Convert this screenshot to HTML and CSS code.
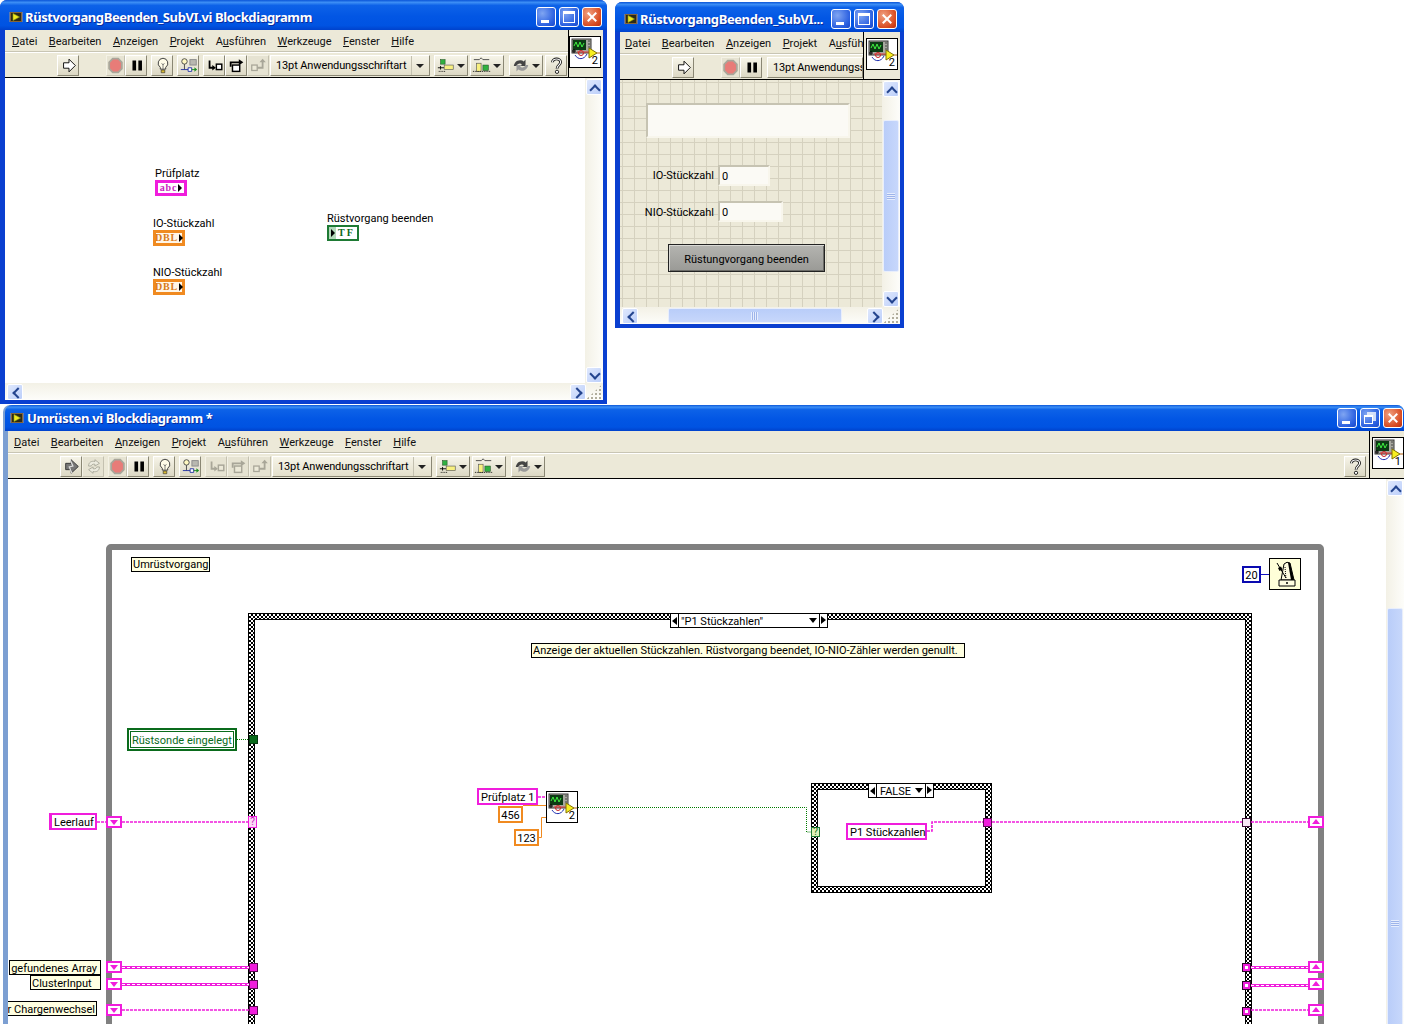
FILE: index.html
```html
<!DOCTYPE html>
<html lang="de">
<head>
<meta charset="utf-8">
<title>LabVIEW Blockdiagramme</title>
<link rel="stylesheet" href="styles.css">
</head>
<body>
<svg class="defs" width="0" height="0" aria-hidden="true">
  <defs>
    <symbol id="i-lv" viewBox="0 0 14 14"><rect x="1" y="2" width="12" height="10" fill="#4a3820"/><path d="M0 3h14M0 5h14M0 7h14M0 9h14M0 11h14" stroke="#e0a860" stroke-width=".8"/><rect x="2" y="3" width="10" height="8" fill="#2c2a18"/><path d="M4 3.500l6.500 3.500-6.500 3.500z" fill="#f0e820" stroke="#90a010" stroke-width=".6"/></symbol>
    <symbol id="i-run" viewBox="0 0 22 21"><path d="M5 7.500h6V3.500l7 7-7 7v-4H5z" fill="#fff" stroke="#000"/></symbol>
    <symbol id="i-broken" viewBox="0 0 22 21"><path d="M4 7h6V3l8 7.500-8 7.500v-4H4z" fill="#777" stroke="#333"/><path d="M9 3l3 7-4 1 3 7" fill="none" stroke="#ddd" stroke-width="1.400"/></symbol>
    <symbol id="i-rerun" viewBox="0 0 22 21"><path d="M5 10c0-4 3-6 7-5V3l5 4-5 3V8c-3-.5-4 1-4 2zM17 11c0 4-3 6-7 5v2l-5-4 5-3v2c3 .5 4-1 4-2z" fill="#ecebdf" stroke="#a8a89a"/></symbol>
    <symbol id="i-stop" viewBox="0 0 18 21"><path d="M6 3h6l4 4v7l-4 4H6l-4-4V7z" fill="#e87c78" stroke="#a9a69a" stroke-width="2"/></symbol>
    <symbol id="i-pause" viewBox="0 0 22 21"><path d="M6 5h4v11H6zM12.500 5h4v11h-4z" fill="#000"/></symbol>
    <symbol id="i-bulb" viewBox="0 0 22 21"><path d="M11 2.500a5.500 5.500 0 0 1 3 10v2H8v-2a5.500 5.500 0 0 1 3-10z" fill="#fffce8" stroke="#333"/><path d="M9 15.500h4v3H9z" fill="#d8b830" stroke="#333" stroke-width=".7"/><path d="M9.500 8l1.500 2 1.500-2M11 10v4" fill="none" stroke="#555" stroke-width=".8"/></symbol>
    <symbol id="i-probe" viewBox="0 0 22 21"><circle cx="6" cy="6" r="3" fill="#fff8c0" stroke="#444"/><path d="M6 9v6" stroke="#444"/><rect x="12" y="4" width="7" height="6" fill="#b8b8b0" stroke="#888"/><path d="M2 15h8M10 13h4v4h-4z" fill="#fff" stroke="#2030a0"/><path d="M14 15h4" stroke="#1a8a20"/><path d="M17 12.500l3 2.500-3 2.500z" fill="#1a8a20"/></symbol>
    <symbol id="i-stepin" viewBox="0 0 22 21"><path d="M5 5v8h4" fill="none" stroke="#000" stroke-width="2"/><path d="M8 10l4 3-4 3z" fill="#000"/><rect x="12.500" y="9" width="6" height="6" fill="#fff" stroke="#000" stroke-width="1.600"/></symbol>
    <symbol id="i-stepover" viewBox="0 0 22 21"><path d="M4 12V7h10" fill="none" stroke="#000" stroke-width="2"/><path d="M13 3.500l5 3.500-5 3.500z" fill="#000"/><rect x="6" y="10" width="8" height="7" fill="#fff" stroke="#000" stroke-width="1.600"/></symbol>
    <symbol id="i-stepout" viewBox="0 0 22 21"><rect x="3" y="10" width="6" height="6" fill="#ece9d8" stroke="#a8a698" stroke-width="1.400"/><path d="M9 13h6V6" fill="none" stroke="#a8a698" stroke-width="2"/><path d="M11.500 7l3.500-4 3.500 4z" fill="#a8a698"/></symbol>
    <symbol id="i-dim-stepin" viewBox="0 0 22 21"><path d="M5 5v8h4" fill="none" stroke="#a8a698" stroke-width="2"/><path d="M8 10l4 3-4 3z" fill="#a8a698"/><rect x="12.500" y="9" width="6" height="6" fill="#ece9d8" stroke="#a8a698" stroke-width="1.600"/></symbol>
    <symbol id="i-dim-stepover" viewBox="0 0 22 21"><path d="M4 12V7h10" fill="none" stroke="#a8a698" stroke-width="2"/><path d="M13 3.500l5 3.500-5 3.500z" fill="#a8a698"/><rect x="6" y="10" width="8" height="7" fill="#ece9d8" stroke="#a8a698" stroke-width="1.600"/></symbol>
    <symbol id="i-align" viewBox="0 0 22 21"><rect x="5" y="4" width="5" height="5" fill="#30b040" stroke="#205020" stroke-width=".6"/><path d="M2 13h7M5 11v4" stroke="#000"/><rect x="9" y="10" width="10" height="5" fill="#f8f080" stroke="#555" stroke-width=".7"/><path d="M3 17h8" stroke="#000" stroke-dasharray="1 1"/></symbol>
    <symbol id="i-dist" viewBox="0 0 24 21"><path d="M3 4h6M13 4h7" stroke="#444"/><path d="M9 4l2-2 2 2" fill="none" stroke="#444"/><rect x="6" y="8" width="5" height="9" fill="#f8f080" stroke="#555" stroke-width=".7"/><rect x="13" y="10" width="6" height="6" fill="#30b040" stroke="#205020" stroke-width=".6"/><path d="M2 17h19" stroke="#000" stroke-dasharray="1 1"/></symbol>
    <symbol id="i-order" viewBox="0 0 22 21"><path d="M3 11a7 7 0 0 1 11-5l2-2v7h-6l2-2a4 4 0 0 0-6 2z" fill="#444"/><path d="M19 10a7 7 0 0 1-11 5l-2 2v-7h6l-2 2a4 4 0 0 0 6-2z" fill="#999"/></symbol>
    <symbol id="i-help" viewBox="0 0 22 21"><path d="M6 7c0-5 9-5 9 0 0 3-4 3-4 7" fill="none" stroke="#111" stroke-width="3"/><path d="M6 7c0-5 9-5 9 0 0 3-4 3-4 7" fill="none" stroke="#fff" stroke-width="1.200"/><circle cx="11" cy="17.500" r="1.800" fill="#fff" stroke="#111"/></symbol>
    <symbol id="i-vi" viewBox="0 0 30 30"><rect x="2" y="2" width="19" height="14" fill="#a8a8a0" stroke="#333"/><rect x="3" y="3" width="13" height="10" fill="#0c3a14"/><path d="M4 9l2-4 2 5 2-5 2 5 2-4" fill="none" stroke="#40f040" stroke-width="1"/><path d="M18 4h2M18 7h2M18 10h2" stroke="#444"/><path d="M2 14h4M4 12v4" stroke="#000"/><path d="M5 18c3 5 9 5 12-1" fill="none" stroke="#2030b0"/><circle cx="11" cy="16" r="2.500" fill="none" stroke="#c82020"/><path d="M7 15h13" stroke="#e04040"/><path d="M19 11v10l8-5z" fill="#f8f020" stroke="#807000"/><path d="M27 16h3" stroke="#b06010"/></symbol>
    <symbol id="i-wait" viewBox="0 0 30 30"><path d="M11 21L14 5Q17 2 20 4L24 21z" fill="#fffde0" stroke="#000"/><path d="M20 4l4 17h-3L18 3.500z" fill="#000"/><path d="M15 8l1 12" stroke="#000" stroke-dasharray="1 1"/><path d="M7 4l9 15" stroke="#000"/><path d="M8 9l3-1.500 1.500 3-3 1.500z" fill="#000"/><path d="M9 21h16v6H9z" fill="#fffde0" stroke="#000"/><circle cx="17" cy="24" r="1" fill="#000"/></symbol>
  </defs>
</svg>

<main class="desk">

  <section class="win win-a">
    <header class="title"><svg class="ti"><use href="#i-lv"/></svg><h1 class="tt">RüstvorgangBeenden_SubVI.vi Blockdiagramm</h1>
      <div class="caps"><span class="cap"><i class="g-min"></i></span><span class="cap"><i class="g-max"></i></span><span class="cap cap-x"><i class="g-x"></i></span></div></header>
    <div class="client">
      <div class="head">
        <div class="bars">
          <nav class="menu"><span><u>D</u>atei</span><span><u>B</u>earbeiten</span><span><u>A</u>nzeigen</span><span><u>P</u>rojekt</span><span>A<u>u</u>sführen</span><span><u>W</u>erkzeuge</span><span><u>F</u>enster</span><span><u>H</u>ilfe</span></nav>
          <div class="tools">
            <span class="tb"><svg><use href="#i-run"/></svg></span>
            <span class="tb tb-off m-stop"><svg><use href="#i-stop"/></svg></span>
            <span class="tb"><svg><use href="#i-pause"/></svg></span>
            <span class="tb m-s"><svg><use href="#i-bulb"/></svg></span>
            <span class="tb m-s"><svg><use href="#i-probe"/></svg></span>
            <span class="tb m-s"><svg><use href="#i-stepin"/></svg></span>
            <span class="tb"><svg><use href="#i-stepover"/></svg></span>
            <span class="tb tb-off"><svg><use href="#i-stepout"/></svg></span>
            <span class="font"><span class="font-t">13pt Anwendungsschriftart</span><b class="caret"></b></span>
            <span class="tw"><svg><use href="#i-align"/></svg><b class="caret"></b></span>
            <span class="tw"><svg><use href="#i-dist"/></svg><b class="caret"></b></span>
            <span class="tw m-m"><svg><use href="#i-order"/></svg><b class="caret"></b></span>
            <span class="tb"><svg><use href="#i-help"/></svg></span>
          </div>
        </div>
        <div class="pane"><span class="vi"><svg><use href="#i-vi"/></svg><em>2</em></span></div>
      </div>
      <div class="mid">
        <div class="canvas">
          <span class="lbl a1">Prüfplatz</span><span class="term t-str a2"><b class="fill">abc</b><i class="tri-r"></i></span>
          <span class="lbl a3">IO-Stückzahl</span><span class="term t-dbl a4"><b class="fill">DBL</b><i class="tri-r"></i></span>
          <span class="lbl a5">NIO-Stückzahl</span><span class="term t-dbl a6"><b class="fill">DBL</b><i class="tri-r"></i></span>
          <span class="lbl a7">Rüstvorgang beenden</span><span class="term t-bool a8"><i class="tri-r"></i><b class="fill">TF</b></span>
        </div>
        <div class="vs"><span class="sb up"></span><span class="track"></span><span class="sb dn"></span></div>
      </div>
      <div class="hs"><span class="sb lf"></span><span class="track"></span><span class="sb rt"></span><span class="grip"></span></div>
    </div>
  </section>

  <section class="win win-b">
    <header class="title"><svg class="ti"><use href="#i-lv"/></svg><h1 class="tt">RüstvorgangBeenden_SubVI...</h1>
      <div class="caps"><span class="cap"><i class="g-min"></i></span><span class="cap"><i class="g-max"></i></span><span class="cap cap-x"><i class="g-x"></i></span></div></header>
    <div class="client">
      <div class="head">
        <div class="bars">
          <nav class="menu"><span><u>D</u>atei</span><span><u>B</u>earbeiten</span><span><u>A</u>nzeigen</span><span><u>P</u>rojekt</span><span>A<u>u</u>sführen</span></nav>
          <div class="tools">
            <span class="tb"><svg><use href="#i-run"/></svg></span>
            <span class="tb tb-off m-stop"><svg><use href="#i-stop"/></svg></span>
            <span class="tb"><svg><use href="#i-pause"/></svg></span>
            <span class="font font-b"><span class="font-t">13pt Anwendungsschriftart</span></span>
          </div>
        </div>
        <div class="pane"><span class="vi"><svg><use href="#i-vi"/></svg><em>2</em></span></div>
      </div>
      <div class="mid">
        <div class="canvas grid">
          <span class="fp-in b1"></span>
          <span class="lbl b2">IO-Stückzahl</span><span class="fp-in fp-num b3">0</span>
          <span class="lbl b4">NIO-Stückzahl</span><span class="fp-in fp-num b5">0</span>
          <span class="fp-btn b6">Rüstungvorgang beenden</span>
        </div>
        <div class="vs"><span class="sb up"></span><span class="track t-24"></span><span class="thumb th-v th-b"><i class="gr-h"></i></span><span class="track"></span><span class="sb dn"></span></div>
      </div>
      <div class="hs"><span class="sb lf"></span><span class="track t-30"></span><span class="thumb th-h"><i class="gr-v"></i></span><span class="track"></span><span class="sb rt"></span><span class="grip"></span></div>
    </div>
  </section>

  <section class="win win-c">
    <header class="title"><svg class="ti"><use href="#i-lv"/></svg><h1 class="tt">Umrüsten.vi Blockdiagramm *</h1>
      <div class="caps"><span class="cap"><i class="g-min"></i></span><span class="cap"><i class="g-res"></i></span><span class="cap cap-x"><i class="g-x"></i></span></div></header>
    <div class="client">
      <div class="head">
        <div class="bars">
          <nav class="menu"><span><u>D</u>atei</span><span><u>B</u>earbeiten</span><span><u>A</u>nzeigen</span><span><u>P</u>rojekt</span><span>A<u>u</u>sführen</span><span><u>W</u>erkzeuge</span><span><u>F</u>enster</span><span><u>H</u>ilfe</span></nav>
          <div class="tools">
            <span class="tb"><svg><use href="#i-broken"/></svg></span>
            <span class="tb tb-off"><svg><use href="#i-rerun"/></svg></span>
            <span class="tb tb-off m-xs"><svg><use href="#i-stop"/></svg></span>
            <span class="tb"><svg><use href="#i-pause"/></svg></span>
            <span class="tb m-s"><svg><use href="#i-bulb"/></svg></span>
            <span class="tb m-s"><svg><use href="#i-probe"/></svg></span>
            <span class="tb tb-off m-s"><svg><use href="#i-dim-stepin"/></svg></span>
            <span class="tb tb-off"><svg><use href="#i-dim-stepover"/></svg></span>
            <span class="tb tb-off"><svg><use href="#i-stepout"/></svg></span>
            <span class="font"><span class="font-t">13pt Anwendungsschriftart</span><b class="caret"></b></span>
            <span class="tw"><svg><use href="#i-align"/></svg><b class="caret"></b></span>
            <span class="tw"><svg><use href="#i-dist"/></svg><b class="caret"></b></span>
            <span class="tw m-m"><svg><use href="#i-order"/></svg><b class="caret"></b></span>
            <span class="tb m-auto"><svg><use href="#i-help"/></svg></span>
          </div>
        </div>
        <div class="pane"><span class="vi"><svg><use href="#i-vi"/></svg><em>1</em></span></div>
      </div>
      <div class="mid">
        <div class="canvas">
          <div class="loop"></div>
          <div class="case c-outer"><div class="case-in"></div></div>
          <div class="sel s-outer"><i class="tri-l"></i><span class="sel-t">"P1 Stückzahlen"</span><i class="tri-d"></i><i class="tri-r2"></i></div>
          <div class="case c-inner"><div class="case-in"></div></div>
          <div class="sel s-inner"><i class="tri-l"></i><span class="sel-t">FALSE</span><i class="tri-d"></i><i class="tri-r2"></i></div>

          <svg class="wires" viewBox="8 479 1380 545">
            <path class="w-green" d="M237 739.500h12M578 807.500h228.500v24.500h5"/>
            <path class="w-or" d="M523 805.500h23M539 837.500h2.500v-20h4.500"/>
            <path class="w-bl" d="M1261 574.500h8"/>
            <path class="w-str" d="M538 797h9M97 822h9M122 822h126M927 831h5v-9h51M992 822h250M1251 822h57M122 1010h127M1251 1010h57"/>
            <path class="w-thick" d="M122 967.500h127M122 984.500h127M1251 967.500h57M1251 985.500h57"/>
            <path class="w-dash" d="M122 967.500h127M122 984.500h127M1251 967.500h57M1251 985.500h57"/>
          </svg>

          <span class="note n-loop">Umrüstvorgang</span>
          <span class="note n-case">Anzeige der aktuellen Stückzahlen. Rüstvorgang beendet, IO-NIO-Zähler werden genullt.</span>
          <span class="k-num">20</span>
          <span class="wait"><svg><use href="#i-wait"/></svg></span>

          <span class="k k-bool">Rüstsonde eingelegt</span>
          <span class="tun tun-g p-g"></span>

          <span class="k k-str k-leer">Leerlauf</span>
          <span class="note n-arr">gefundenes Array</span>
          <span class="note n-cl">ClusterInput</span>
          <span class="note n-ch">r Chargenwechsel</span>

          <span class="sr dn-sr l1"></span><span class="sr dn-sr l2"></span><span class="sr dn-sr l3"></span><span class="sr dn-sr l4"></span>
          <span class="sr up-sr r1"></span><span class="sr up-sr r2"></span><span class="sr up-sr r3"></span><span class="sr up-sr r4"></span>

          <span class="tun tun-q q1">?</span>
          <span class="tun tun-m i1"></span><span class="tun tun-m i2"></span><span class="tun tun-m i3"></span>
          <span class="tun tun-w o1"></span>
          <span class="tun tun-d o2"></span><span class="tun tun-d o3"></span><span class="tun tun-d o4"></span>

          <span class="k k-str k-pp">Prüfplatz 1</span>
          <span class="k k-dbl k-456">456</span>
          <span class="k k-dbl k-123">123</span>
          <span class="vi vi-sub"><svg><use href="#i-vi"/></svg><em>2</em></span>

          <span class="tun tun-sel">?</span>
          <span class="k k-str k-p1">P1 Stückzahlen</span>
          <span class="tun tun-m i4"></span>
        </div>
        <div class="vs"><span class="sb up"></span><span class="track t-112"></span><span class="thumb th-v th-c"><i class="gr-h"></i></span></div>
      </div>
    </div>
  </section>

</main>
</body>
</html>
```
FILE: styles.css
```css
* { box-sizing: border-box; }
html, body { margin: 0; padding: 0; background: #fff; }
body { font: 11px Roboto, "Liberation Sans", sans-serif; color: #000; }
.defs { position: absolute; }
.desk { position: relative; width: 1404px; height: 1024px; overflow: hidden; background: #fff; }

/* windows on the desktop */
.win { position: absolute; display: flex; flex-direction: column; background: #0a3fd0; border-radius: 7px 7px 0 0; }
.win-a { left: 0; top: 0; width: 607px; height: 404px; }
.win-b { left: 615px; top: 2px; width: 289px; height: 326px; }
.win-c { left: 3px; top: 405px; width: 1401px; height: 640px; background: #7c9fd2; }

.title { height: 30px; flex: none; display: flex; align-items: center; padding: 4px 5px 0 9px; color: #fff;
  border-radius: 7px 7px 0 0;
  background: linear-gradient(#0a55d8, #3c8ef5 8%, #0d62e8 18%, #0256e4 55%, #0053e2 85%, #0042cc); }
.win-b .title { padding-right: 7px; }
.win-c .title { height: 26px; padding: 0 1px 1px 5px; margin-left: 2px; }
.ti { width: 14px; height: 14px; flex: none; }
.tt { margin: 0 0 0 2px; font: bold 13px "Noto Sans", sans-serif; letter-spacing: -.4px; white-space: nowrap; text-shadow: 1px 1px 0 #0a2c9c; flex: 1; min-width: 0; }
.win-c .tt { margin-left: 3px; }
.caps { display: flex; gap: 3px; flex: none; }
.cap { position: relative; width: 20px; height: 20px; border: 1px solid #fff; border-radius: 3px; background: radial-gradient(circle at 30% 30%, #7fa5f2, #2a5fe0 70%, #1a48c8); }
.cap-x { background: radial-gradient(circle at 30% 30%, #f0a080, #d84a20 70%, #b83010); }
.g-min { position: absolute; left: 4px; bottom: 3px; width: 8px; height: 3px; background: #fff; }
.g-max { position: absolute; left: 3px; top: 3px; width: 12px; height: 12px; border: 1px solid #fff; border-top-width: 3px; }
.g-res { position: absolute; left: 3px; top: 6px; width: 9px; height: 9px; border: 1px solid #fff; border-top-width: 2px; box-shadow: 3px -3px 0 0 rgba(255,255,255,.75); }
.g-x { position: absolute; left: 3px; top: 8px; width: 12px; height: 2px; background: #fff; transform: rotate(45deg); }
.g-x::after { content: ""; position: absolute; inset: 0; background: #fff; transform: rotate(90deg); }

.client { flex: 1; min-height: 0; margin: 0 4px 4px 5px; display: flex; flex-direction: column; background: #ece9d8; }
.win-c .client { margin: 0 0 0 5px; }
.head { display: flex; flex: none; border-bottom: 1px solid #000; height: 48px; }
.bars { flex: 1; min-width: 0; overflow: hidden; }
.menu { height: 22px; display: flex; gap: 11.500px; align-items: center; padding: 2px 0 0 7px; border-bottom: 1px solid #c8c5b4; box-shadow: 0 1px 0 #fff; white-space: nowrap; color: #111; }
.win-b .menu { padding-left: 5px; }
.win-c .menu { padding: 1px 0 0 6px; }
.tools { height: 25px; display: flex; align-items: center; padding: 1px 0 0 52px; }
.tb { width: 22px; height: 21px; flex: none; border: 1px solid; border-color: #fff #8a8774 #8a8774 #fff; background: linear-gradient(#f6f4e8, #dcd8c4); display: flex; }
.tb-off { border-color: #f4f2e6 #c4c1b0 #c4c1b0 #f4f2e6; background: #e6e3d2; }
.tb svg, .tw svg { width: 22px; height: 19px; flex: none; }
.m-stop { margin-left: 27px; width: 19px; }
.m-stop svg { width: 17px; }
.m-xs { margin-left: 4px; width: 19px; }
.m-xs svg { width: 17px; }
.m-s { margin-left: 4px; }
.m-m { margin-left: 3px; }
.m-auto { margin-left: auto; margin-right: 3px; }
.font { width: 160px; height: 21px; flex: none; margin: 0 4px 0 1px; padding-left: 5px; display: flex; align-items: center; justify-content: space-between; border: 1px solid; border-color: #fff #8a8774 #8a8774 #fff; background: linear-gradient(#f6f4e8, #e4e0cc); white-space: nowrap; overflow: hidden; }
.font-b { width: 96px; margin-left: 5px; justify-content: flex-start; }
.font-t { letter-spacing: -.12px; }
.caret { width: 18px; height: 100%; flex: none; position: relative; border-left: 1px solid #c4c1b0; }
.caret::after { content: ""; position: absolute; right: 5px; top: 8px; border: 4px solid transparent; border-top: 4px solid #222; border-bottom: 0; }
.tw { width: 34px; height: 21px; flex: none; margin-right: 2px; position: relative; border: 1px solid; border-color: #fff #8a8774 #8a8774 #fff; background: linear-gradient(#f6f4e8, #dcd8c4); display: flex; }
.tw .caret { position: absolute; right: 0; top: 0; width: 12px; border: 0; }
.tw .caret::after { right: 2px; }

.pane { width: 35px; flex: none; border-left: 1px solid #000; padding: 6px 0 0 0; background: #ece9d8; }
.win-b .pane { width: 37px; padding-left: 2px; }
.win-c .pane { padding-left: 2px; }
.vi { position: relative; display: block; width: 32px; height: 32px; background: #fff; border: 1px solid #000; }
.vi svg { position: absolute; left: 0; top: 0; width: 30px; height: 30px; }
.vi em { position: absolute; right: 2px; bottom: 0; font: 11px/12px Roboto, sans-serif; }

.mid { flex: 1; min-height: 0; display: flex; }
.canvas { position: relative; flex: 1; min-width: 0; overflow: hidden; background: #fff; }
.grid { background-color: #ece9d8; background-image: linear-gradient(#d5d1bf 1px, transparent 1px), linear-gradient(90deg, #d5d1bf 1px, transparent 1px); background-size: 12px 12px; background-position: 2px 2px; }

/* scrollbars */
.vs { width: 18px; flex: none; display: flex; flex-direction: column; align-items: center; background: linear-gradient(90deg, #f3f1e6, #fdfdfa); padding-top: 1px; }
.hs { height: 17px; flex: none; display: flex; align-items: center; background: linear-gradient(#f3f1e6, #fdfdfa); padding-left: 2px; }
.track { flex: 1; }
.t-24 { flex: none; height: 23px; }
.t-30 { flex: none; width: 30px; }
.t-112 { flex: none; height: 112px; }
.sb { position: relative; flex: none; width: 16px; height: 16px; border-radius: 2px; border: 1px solid #fff; background: linear-gradient(135deg, #dfe8fd, #bccffa); }
.sb::after { content: ""; position: absolute; left: 4px; top: 5px; width: 6px; height: 6px; border: solid #23448e; border-width: 2px 0 0 2px; }
.up::after { transform: rotate(45deg); top: 6px; left: 4px; }
.dn::after { transform: rotate(225deg); top: 2px; left: 4px; }
.lf::after { transform: rotate(-45deg); left: 6px; top: 4px; }
.rt::after { transform: rotate(135deg); left: 2px; top: 4px; }
.grip { width: 17px; height: 16px; flex: none; background: radial-gradient(circle, #b0ad9c 1px, transparent 1.2px) 0 0/4px 4px; clip-path: polygon(100% 0, 100% 100%, 0 100%); }
.thumb { flex: none; position: relative; background: linear-gradient(90deg, #b9cdf9, #c7d7fb); border-radius: 2px; border: 1px solid #e8eefc; }
.th-v { width: 16px; display: block; }
.th-b { height: 152px; }
.th-c { flex: 1; }
.th-c .gr-h { top: 311px; }
.th-h { width: 174px; height: 15px; background: linear-gradient(#b9cdf9, #c7d7fb); }
.gr-h { position: absolute; left: 3px; top: 72px; width: 8px; height: 7px; background: repeating-linear-gradient(#e6edfd 0 1px, #9eb4ea 1px 2px); }
.gr-v { position: absolute; left: 82px; top: 3px; width: 7px; height: 8px; background: repeating-linear-gradient(90deg, #e6edfd 0 1px, #9eb4ea 1px 2px); }

/* diagram A */
.lbl { position: absolute; white-space: nowrap; line-height: 14px; }
.term { position: absolute; width: 32px; height: 16px; display: flex; align-items: center; justify-content: center; gap: 1px; font: bold 10px/10px "Liberation Serif", serif; letter-spacing: .8px; }
.term .fill { font: inherit; }
.tri-r { width: 0; height: 0; flex: none; border: 4px solid transparent; border-left: 4px solid #000; border-right: 0; }
.t-str { border: 3px solid #f01ddc; color: #c81ec0; background: #fff; }
.t-dbl { border: 3px solid #f08a20; color: #d87a18; background: #fff6e8; }
.t-bool { border: 2px solid #1e7a34; color: #0c6a20; background: linear-gradient(90deg, #b4d8ba 0 7px, #fff 7px); letter-spacing: 2px; font-size: 10px; justify-content: flex-start; padding-left: 2px; gap: 3px; }
.a1 { left: 150px; top: 89px; }
.a2 { left: 150px; top: 102px; }
.a3 { left: 148px; top: 139px; }
.a4 { left: 148px; top: 152px; }
.a5 { left: 148px; top: 188px; }
.a6 { left: 148px; top: 201px; }
.a7 { left: 322px; top: 134px; }
.a8 { left: 322px; top: 147px; }

/* front panel B */
.fp-in { position: absolute; background: #fbfaf5; border: 2px solid; border-color: #c6c3b2 #f8f6ec #f8f6ec #c6c3b2; }
.fp-num { padding: 3px 0 0 2px; line-height: 14px; }
.b1 { left: 26px; top: 23px; width: 204px; height: 35px; }
.b2 { right: 168px; top: 89px; }
.b3 { left: 98px; top: 85px; width: 52px; height: 21px; }
.b4 { right: 168px; top: 126px; }
.b5 { left: 98px; top: 121px; width: 65px; height: 21px; }
.b6 { left: 48px; top: 164px; }
.fp-btn { position: absolute; width: 157px; height: 28px; padding-top: 2px; display: flex; align-items: center; justify-content: center; border: 1px solid #222; background: linear-gradient(#b4b4b0, #9a9a96); box-shadow: inset 1px 1px 0 #d8d8d4, inset -1px -1px 0 #6c6c68; }

/* diagram C */
.loop { position: absolute; left: 98px; top: 65px; width: 1218px; height: 620px; border: 6px solid #808080; border-radius: 5px; }
.case { position: absolute; padding: 5px; border: 1px solid #000; background: repeating-conic-gradient(#000 0 25%, #fff 0 50%) 0 0/4px 4px; }
.case-in { width: 100%; height: 100%; background: #fff; border: 1px solid #000; }
.c-outer { left: 240px; top: 134px; width: 1004px; height: 620px; }
.c-inner { left: 803px; top: 304px; width: 181px; height: 110px; }
.sel { position: absolute; height: 15px; display: flex; align-items: center; background: #fff; border: 1px solid #000; line-height: 13px; }
.s-outer { left: 662px; top: 134px; width: 158px; }
.s-inner { left: 860px; top: 304px; width: 66px; }
.sel-t { flex: 1; padding: 1px 0 0 2px; border-left: 1px solid #000; height: 100%; white-space: nowrap; overflow: hidden; }
.s-inner .sel-t { padding-left: 3px; }
.tri-l { width: 7px; height: 0; flex: none; border: solid transparent; border-width: 4px 0 4px 0; position: relative; }
.tri-l::after { content: ""; position: absolute; left: 1px; top: -4px; border: 4px solid transparent; border-right: 5px solid #000; border-left: 0; }
.tri-r2 { width: 8px; height: 13px; flex: none; position: relative; border-left: 1px solid #000; }
.tri-r2::after { content: ""; position: absolute; left: 1px; top: 2px; border: 4px solid transparent; border-left: 5px solid #000; border-right: 0; }
.tri-d { width: 0; height: 0; flex: none; margin-right: 2px; margin-left: -12px; border: 4px solid transparent; border-top: 5px solid #000; border-bottom: 0; }

.wires { position: absolute; left: 0; top: 0; width: 1380px; height: 545px; fill: none; }
.w-green { stroke: #007a00; stroke-dasharray: 1 1; }
.w-or { stroke: #f08a20; }
.w-bl { stroke: #1010c0; }
.w-str { stroke: #f01ddc; stroke-width: 1.600; stroke-dasharray: 3 1; }
.w-thick { stroke: #f01ddc; stroke-width: 3; }
.w-dash { stroke: #fff; stroke-dasharray: 3 2; }

.note { position: absolute; height: 15px; padding: 0 1px; line-height: 13px; background: #ffffe1; border: 1px solid #000; white-space: nowrap; }
.n-loop { left: 123px; top: 78px; width: 79px; }
.n-case { left: 523px; top: 164px; width: 434px; }
.n-arr { left: 1px; top: 481px; width: 92px; text-align: right; padding-right: 3px; line-height: 15px; }
.n-cl { left: 22px; top: 496px; width: 71px; line-height: 15px; }
.n-ch { left: -3px; top: 522px; width: 92px; text-align: right; line-height: 15px; }

.k { position: absolute; white-space: nowrap; background: #fff; display: flex; align-items: center; }
.k-bool { left: 119px; top: 249px; width: 110px; height: 23px; padding: 2px 0 0 3px; color: #0a6b1c; border: 2px solid #0a6b1c; box-shadow: inset 0 0 0 1px #fff, inset 0 0 0 2px #0a6b1c; }
.k-str { border: 2px solid #f01ddc; height: 17px; padding: 2px 0 0 2px; }
.k-leer { left: 41px; top: 334px; width: 48px; border-left-width: 3px; }
.k-pp { left: 469px; top: 309px; width: 61px; }
.k-p1 { left: 838px; top: 344px; width: 81px; }
.k-dbl { border: 2px solid #f08a20; height: 17px; width: 25px; padding-top: 2px; justify-content: center; }
.k-456 { left: 490px; top: 327px; }
.k-123 { left: 506px; top: 350px; }
.k-num { position: absolute; left: 1234px; top: 87px; width: 19px; height: 17px; border: 2px solid #0a0ab0; background: #fff; text-align: center; line-height: 15px; }
.wait { position: absolute; left: 1261px; top: 79px; width: 32px; height: 32px; background: #ffffd8; border: 1px solid #000; }
.wait svg { width: 30px; height: 30px; display: block; }
.vi-sub { position: absolute; left: 538px; top: 312px; }

.sr { position: absolute; width: 16px; height: 12px; border: 2px solid #f01ddc; background: #fff; }
.sr::after { content: ""; position: absolute; left: 2px; border: 4px solid transparent; }
.dn-sr::after { top: 2px; border-top: 5px solid #f01ddc; border-bottom: 0; }
.up-sr::after { top: 1px; border-bottom: 5px solid #f01ddc; border-top: 0; }
.l1 { left: 98px; top: 337px; }
.l2 { left: 98px; top: 482px; }
.l3 { left: 98px; top: 499px; }
.l4 { left: 98px; top: 525px; }
.r1 { left: 1300px; top: 337px; }
.r2 { left: 1300px; top: 482px; }
.r3 { left: 1300px; top: 499px; }
.r4 { left: 1300px; top: 525px; }

.tun { position: absolute; width: 9px; height: 9px; }
.tun-g { background: #0a6b1c; border: 1px solid #063c10; }
.p-g { left: 241px; top: 256px; }
.tun-m { background: #f01ddc; border: 1px solid #5c0a54; }
.tun-w { background: #f8e8f6; border: 1px solid #3c1038; }
.tun-d { background: #f01ddc; border: 1px solid #2c0828; }
.tun-d::after { content: ""; position: absolute; left: 2px; top: 2px; width: 3px; height: 3px; background: #fff; }
.tun-q { left: 240px; top: 337px; height: 12px; background: #fbd8f6; border: 1px solid #f01ddc; color: #c81ec0; font-size: 10px; line-height: 10px; text-align: center; }
.tun-sel { left: 803px; top: 348px; height: 10px; background: #e0f0b8; border: 1px solid #1e7a34; color: #0a6b1c; font-size: 10px; line-height: 8px; text-align: center; }
.i1 { left: 241px; top: 484px; }
.i2 { left: 241px; top: 501px; }
.i3 { left: 241px; top: 527px; }
.i4 { left: 975px; top: 339px; }
.o1 { left: 1234px; top: 339px; }
.o2 { left: 1234px; top: 484px; }
.o3 { left: 1234px; top: 502px; }
.o4 { left: 1234px; top: 528px; }
```
